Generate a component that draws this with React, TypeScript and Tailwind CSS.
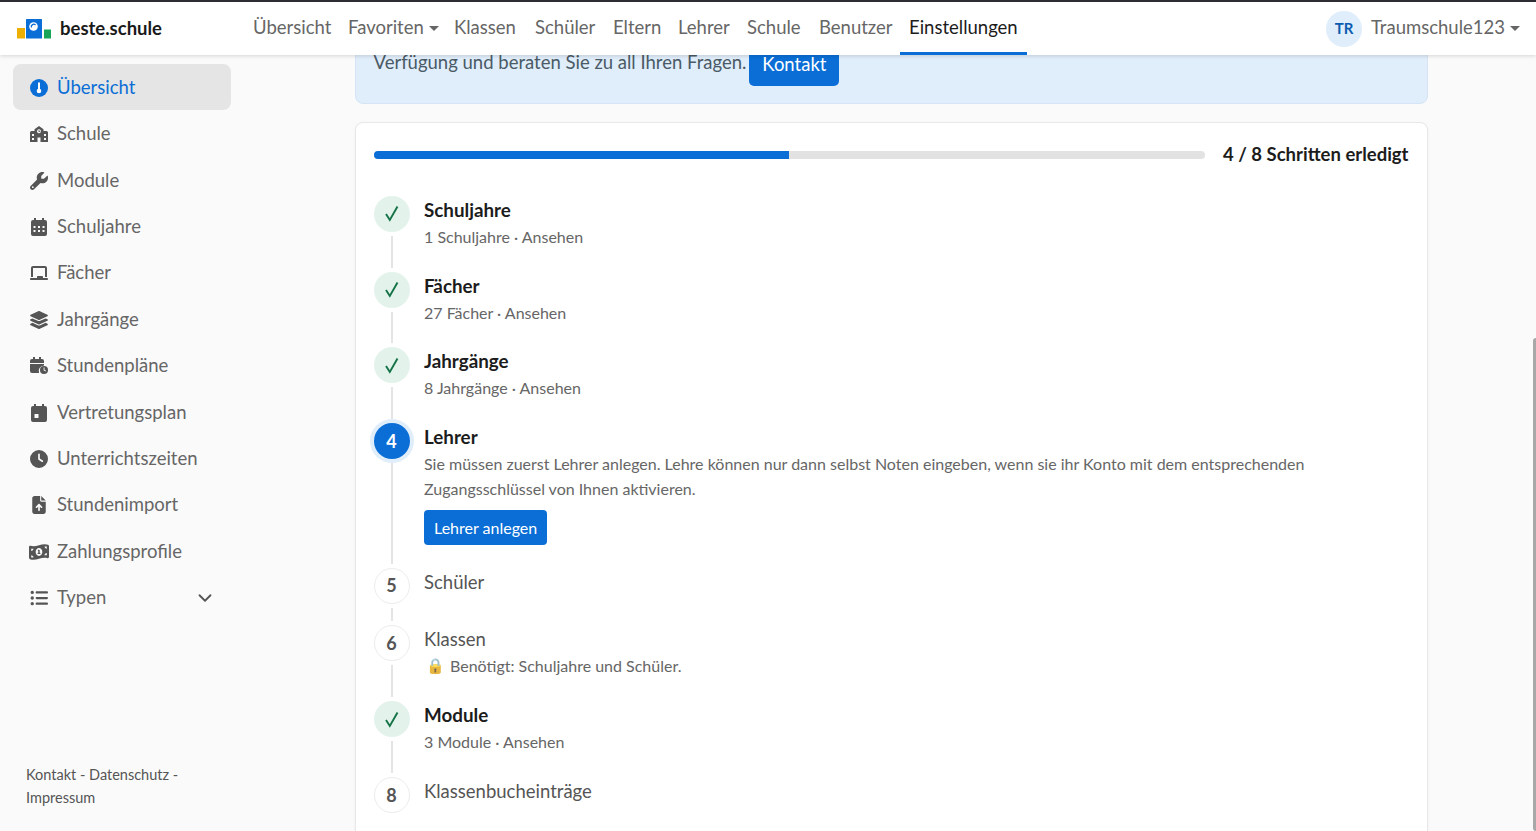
import { FaWrench, FaChalkboard, FaLayerGroup, FaClock, FaFileArrowUp, FaMoneyBill1Wave, FaListUl } from "react-icons/fa6";
import { ChevronDown } from "lucide-react";

const F = "[font-family:Lato,'Noto_Sans',sans-serif]";

function GaugeIcon() {
  return (
    <svg viewBox="0 0 18 18" className="w-[18px] h-[18px]">
      <circle cx="9" cy="9" r="9" fill="#0a6ed6" />
      <rect x="8" y="3.5" width="2" height="7.5" fill="#fff" />
      <circle cx="9" cy="12" r="2.3" fill="#fff" />
    </svg>
  );
}

function SchoolIcon() {
  return (
    <svg viewBox="0 0 18 16" className="w-[18px] h-[16px]" fill="#555" fillRule="evenodd">
      <path d="M9 0l4.5 3.2V5H16.5A1.5 1.5 0 0 1 18 6.5V16H0V6.5A1.5 1.5 0 0 1 1.500 5H4.500V3.200zM9 3.200a2 2 0 1 0 .001 0zM7.500 11.500V16h3v-4.500zM2 8v2h2V8zM2 12v2h2v-2zM14 8v2h2V8zM14 12v2h2v-2z" />
      <path d="M8.600 4h.8v1.200h.9v.8H8.600z" />
    </svg>
  );
}

function CalDays() {
  return (
    <svg viewBox="0 0 16 18" className="w-[16px] h-[18px]" fill="#555" fillRule="evenodd">
      <path d="M3 0h2v2h6V0h2v2h1a2 2 0 0 1 2 2v12a2 2 0 0 1-2 2H2a2 2 0 0 1-2-2V4a2 2 0 0 1 2-2h1zM2.500 8v2h2V8zM7 8v2h2V8zM11.500 8v2h2V8zM2.500 12v2h2v-2zM7 12v2h2v-2zM11.500 12v2h2v-2z" />
    </svg>
  );
}

function CalDay() {
  return (
    <svg viewBox="0 0 16 18" className="w-[16px] h-[18px]" fill="#555" fillRule="evenodd">
      <path d="M3 0h2v2h6V0h2v2h1a2 2 0 0 1 2 2v12a2 2 0 0 1-2 2H2a2 2 0 0 1-2-2V4a2 2 0 0 1 2-2h1zM3.500 10v4h4v-4z" />
    </svg>
  );
}

function CalClock() {
  return (
    <svg viewBox="0 0 18 18" className="w-[18px] h-[18px]" fill="#555">
      <rect x="3" y="0" width="2" height="3" />
      <rect x="9" y="0" width="2" height="3" />
      <path d="M0 4a2 2 0 0 1 2-2h10a2 2 0 0 1 2 2v2H0zM0 7h14v1.500a5.500 5.500 0 0 0-5 7.500H2a2 2 0 0 1-2-2z" />
      <circle cx="14" cy="13" r="4" />
      <path d="M13.600 10.600h.9v2.200l1.500.9-.4.7-2-1.200z" fill="#fafafa" />
    </svg>
  );
}

const side = [
  { l: "Schule", i: <SchoolIcon /> },
  { l: "Module", i: <FaWrench size={18} /> },
  { l: "Schuljahre", i: <CalDays /> },
  { l: "Fächer", i: <FaChalkboard size={18} /> },
  { l: "Jahrgänge", i: <FaLayerGroup size={20} /> },
  { l: "Stundenpläne", i: <CalClock /> },
  { l: "Vertretungsplan", i: <CalDay /> },
  { l: "Unterrichtszeiten", i: <FaClock size={18} /> },
  { l: "Stundenimport", i: <FaFileArrowUp size={18} /> },
  { l: "Zahlungsprofile", i: <FaMoneyBill1Wave size={20} /> },
];

const nav = [
  { l: "Übersicht", w: "w-[95px]" },
  { l: "Favoriten", w: "w-[106px]" },
  { l: "Klassen", w: "w-[81px]" },
  { l: "Schüler", w: "w-[78px]" },
  { l: "Eltern", w: "w-[65px]" },
  { l: "Lehrer", w: "w-[69px]" },
  { l: "Schule", w: "w-[72px]" },
  { l: "Benutzer", w: "w-[90px]" },
  { l: "Einstellungen", w: "w-[127px]" },
];

function Check() {
  return (
    <svg viewBox="0 0 18 18" className="w-[18px] h-[18px] -mt-[1px]" fill="none" stroke="#157347" strokeWidth="1.900">
      <path d="M3 10l3.800 6L14.500 2.500" />
    </svg>
  );
}

function Circle({ kind, n }: { kind: "done" | "active" | "todo"; n?: number }) {
  if (kind === "done")
    return <div className="w-9 h-9 rounded-full bg-[#e3f3ec] flex items-center justify-center shrink-0"><Check /></div>;
  if (kind === "active")
    return <div className="w-9 h-9 rounded-full bg-[#0a6ed6] ring-4 ring-[#e0edfa] text-white text-[18px] font-bold flex items-center justify-center shrink-0">{n}</div>;
  return <div className="w-9 h-9 rounded-full bg-white border border-[#ececec] text-[#555] text-[18px] font-bold flex items-center justify-center shrink-0">{n}</div>;
}

function Step({ kind, n, title, sub, line = true, h, children }: { kind: "done" | "active" | "todo"; n?: number; title: string; sub?: string; line?: boolean; h: string; children?: React.ReactNode }) {
  return (
    <div className={`flex gap-[14.5px] ${h}`}>
      <div className="flex flex-col items-center w-9 shrink-0">
        <Circle kind={kind} n={n} />
        {line && <div className="w-[2px] flex-1 bg-[#e4e4e4] mt-1 mb-1" />}
      </div>
      <div className="min-w-0 flex-1 pt-[1px]">
        {kind === "todo"
          ? <div className="text-[18.5px] leading-[26px] text-[#555]">{title}</div>
          : <div className="text-[18.8px] leading-[26px] font-bold text-[#1c1c1c]">{title}</div>}
        {sub && <div className="mt-[1px] text-[16px] leading-[25px] text-[#666]">{sub}</div>}
        {children}
      </div>
    </div>
  );
}

export default function App() {
  return (
    <div className={`${F} h-[831px] w-[1536px] overflow-hidden relative bg-[#fafafa] flex flex-col`}>
      <header className="relative z-10 h-[55px] shrink-0 bg-white border-t-2 border-t-[#2d2d33] shadow-[0_1px_4px_rgba(0,0,0,0.15)] flex items-center pl-[17px] pr-[16px]">
        <svg viewBox="0 0 34 20" className="w-[34px] h-[20px] shrink-0">
          <rect x="0" y="9" width="8" height="10.500" fill="#eeb000" />
          <rect x="9" y="0" width="16" height="19.500" rx="0.500" fill="#0a6ed6" />
          <circle cx="16.500" cy="7.500" r="4.300" fill="#fff" />
          <path d="M14.500 8.500a2.400 2.400 0 0 1 4-2.500" stroke="#0a6ed6" strokeWidth="1.300" fill="none" />
          <rect x="27" y="10.500" width="7" height="9" fill="#18a558" />
        </svg>
        <span className="ml-[9px] text-[18.5px] font-bold text-[#1a1a1a] w-[184px]">beste.schule</span>
        <nav className="flex h-full items-stretch text-[18.5px] text-[#666]">
          {nav.map((n) => (
            <div key={n.l} className={`${n.w} pl-[9px] flex items-center gap-[5px] ${n.l === "Einstellungen" ? "border-b-[3px] border-[#0a6ed6] text-[#1c1c1c] pt-[2px]" : "pb-[1px]"}`}>
              {n.l}
              {n.l === "Favoriten" && <span className="w-0 h-0 border-x-[5px] border-x-transparent border-t-[5px] border-t-[#666]" />}
            </div>
          ))}
        </nav>
        <div className="ml-auto flex items-center gap-[9px]">
          <div className="w-9 h-9 rounded-full bg-[#e0edfa] text-[#0a5cb0] text-[15px] font-bold flex items-center justify-center">TR</div>
          <span className="text-[18.5px] text-[#666] pb-[1px]">Traumschule123</span>
          <span className="w-0 h-0 border-x-[5px] border-x-transparent border-t-[5px] border-t-[#666] -ml-[4px]" />
        </div>
      </header>

      <div className="flex flex-1 min-h-0">
        <aside className="w-[354.5px] shrink-0 flex flex-col pl-[13px] pb-[22px] pt-[9px]">
          <div className="w-[218px] h-[46px] mb-[1px] pt-[2px] rounded-lg bg-[#e5e5e5] flex items-center pl-[17px] gap-[9px] text-[18.5px] text-[#0a6ed6]">
            <GaugeIcon /> Übersicht
          </div>
          {side.map((s) => (
            <div key={s.l} className="w-[218px] h-[46.4px] flex items-center pl-[17px] text-[18.5px] text-[#666]">
              <span className="w-[18px] flex justify-center text-[#555] mr-[9px] [&>svg]:shrink-0">{s.i}</span>{s.l}
            </div>
          ))}
          <div className="w-[218px] h-[46.4px] flex items-center pl-[17px] pr-[15px] text-[18.5px] text-[#666]">
            <span className="w-[18px] flex justify-center text-[#555] mr-[9px]"><FaListUl size={18} /></span>Typen
            <ChevronDown size={22} strokeWidth={2} className="ml-auto text-[#555]" />
          </div>
          <div className="mt-auto pl-[13px] w-[190px] text-[14.5px] leading-[23px] text-[#555]">Kontakt - Datenschutz - Impressum</div>
        </aside>

        <main className="w-[1073px] shrink-0">
          <div className="-mt-[9px] h-[58px] rounded-b-lg bg-[#e0edfa] border border-[#d5e5f6] pl-[18px] pr-[18px] pt-[8px] text-[18.5px] text-[#4a5a66] flex items-start gap-[3px]">
            <span className="leading-[14px]">Verfügung und beraten Sie zu all Ihren Fragen.</span>
            <span className="h-[39px] w-[90px] -mt-[8px] pb-[4px] rounded-b-[5px] bg-[#0a6ed6] text-white flex items-center justify-center">Kontakt</span>
          </div>

          <section className="mt-[18px] h-[720px] rounded-lg bg-white border border-[#e8e8e8] shadow-[0_1px_3px_rgba(0,0,0,0.05)] pl-[18px] pr-[18px] pt-[18px]">
            <div className="flex items-center gap-[18px]">
              <div className="flex-1 h-[8px] rounded-full bg-[#e2e2e2] overflow-hidden">
                <div className="h-full w-1/2 bg-[#0a6ed6]" />
              </div>
              <span className="text-[18.5px] font-bold text-[#1c1c1c]">4 / 8 Schritten erledigt</span>
            </div>
            <div className="mt-[27px]">
              <Step kind="done" title="Schuljahre" sub="1 Schuljahre · Ansehen" h="h-[75.8px]" />
              <Step kind="done" title="Fächer" sub="27 Fächer · Ansehen" h="h-[75.8px]" />
              <Step kind="done" title="Jahrgänge" sub="8 Jahrgänge · Ansehen" h="h-[75.8px]" />
              <Step kind="active" n={4} title="Lehrer" h="h-[144.8px]">
                <div className="mt-[1px] text-[16px] leading-[25px] text-[#666] max-w-[900px]">Sie müssen zuerst Lehrer anlegen. Lehre können nur dann selbst Noten eingeben, wenn sie ihr Konto mit dem entsprechenden Zugangsschlüssel von Ihnen aktivieren.</div>
                <div className="mt-[9px] inline-flex h-[35px] items-center px-[10px] rounded-[4px] bg-[#0a6ed6] text-white text-[16px]">Lehrer anlegen</div>
              </Step>
              <Step kind="todo" n={5} title="Schüler" h="h-[57.4px]" />
              <Step kind="todo" n={6} title="Klassen" h="h-[76px]">
                <div className="mt-[1px] text-[16px] leading-[25px] text-[#666] flex items-center">
                  <span className="w-[26px] text-[15px] text-left pl-[2px] opacity-80">🔒</span>Benötigt: Schuljahre und Schüler.
                </div>
              </Step>
              <Step kind="done" title="Module" sub="3 Module · Ansehen" h="h-[76px]" />
              <Step kind="todo" n={8} title="Klassenbucheinträge" line={false} h="h-[40px]" />
            </div>
          </section>
        </main>
      </div>
      <div className="absolute right-0 top-[338px] bottom-0 w-[3px] bg-[#a8a8a8] rounded-l-sm" />
    </div>
  );
}
